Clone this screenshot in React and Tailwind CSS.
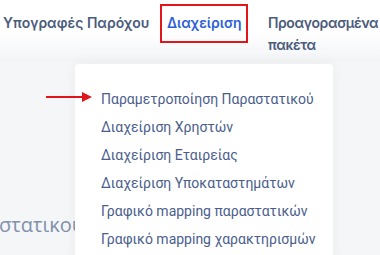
import React from "react";

const menuItems = [
  "Παραμετροποίηση Παραστατικού",
  "Διαχείριση Χρηστών",
  "Διαχείριση Εταιρείας",
  "Διαχείριση Υποκαταστημάτων",
  "Γραφικό mapping παραστατικών",
  "Γραφικό mapping χαρακτηρισμών",
];

const App = () => {
  return (
    <div className="relative w-[380px] h-[255px] overflow-hidden bg-[#f5f6f8] font-['Inter',sans-serif]">
      {/* Top navigation */}
      <div className="h-[62px] bg-gradient-to-b from-white via-white to-[#f3f4f6] flex items-start text-[14px] font-semibold leading-[22px] text-[#4a5b7c]">
        <div className="pl-[3px] pt-[12px] w-[160px]">Υπογραφές Παρόχου</div>
        <div className="mt-[4px] h-[39px] w-[88px] border-2 border-[#e0161b] pl-[5px] pt-[6px] text-[#2f5fd8]">
          Διαχείριση
        </div>
        <div className="ml-[20px] pt-[12px] w-[108px] tracking-[-0.4px]">Προαγορασμένα πακέτα</div>
      </div>

      {/* Page content behind the menu */}
      <div className="pt-[150px] text-[20px] leading-[26px] text-[#8191ab] font-['Open_Sans',sans-serif] -ml-[1px]">
        στατικού
      </div>

      {/* Dropdown */}
      <div className="absolute left-[75px] top-[64px] w-[258px] h-[200px] rounded-t-[4px] bg-white shadow-[0_0_14px_rgba(0,0,0,0.05)] pt-[21px] pl-[26px] font-['Roboto',sans-serif] text-[14px] text-[#4a5e8c]">
        {menuItems.map((item) => (
          <div key={item} className="h-[28px] leading-[28px] whitespace-nowrap">
            {item}
          </div>
        ))}
      </div>

      {/* Red pointer arrow */}
      <svg className="absolute left-[44px] top-[91px]" width="50" height="12" viewBox="0 0 50 12">
        <line x1="2" y1="6" x2="40" y2="6" stroke="#e0161b" strokeWidth="2" />
        <polygon points="38,1 48,6 38,11" fill="#e0161b" />
      </svg>
    </div>
  );
};

export default App;
